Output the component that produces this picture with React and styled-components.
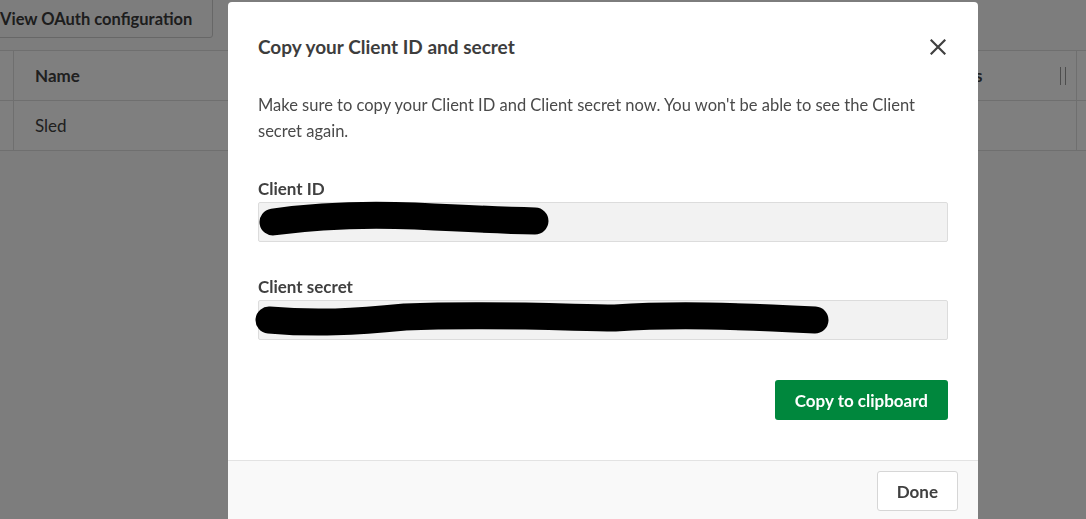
import styled, { createGlobalStyle } from "styled-components";

const GlobalStyle = createGlobalStyle`
  html, body {
    margin: 0;
    padding: 0;
    background: #ffffff;
    font-family: Lato, "Open Sans", "Liberation Sans", sans-serif;
    overflow: hidden;
  }
`;

const Page = styled.div`
  width: 1086px;
  height: 519px;
  display: flex;
  flex-direction: column;
  gap: 12px;
  background: #fafafa;
`;

const Toolbar = styled.div`
  display: flex;
  margin-left: -11px;
  margin-top: -10px;
`;

const OutlineButton = styled.button`
  height: 48px;
  padding: 9px 20px 0 10px;
  border: 1px solid #cfcfcf;
  border-radius: 3px;
  background: #fbfbfb;
  color: #3a3a3a;
  font-family: inherit;
  font-size: 16.5px;
  font-weight: 700;
`;

const Table = styled.div`
  display: flex;
  flex-direction: column;
  border-top: 1px solid #dedede;
  background: #ffffff;
`;

const Row = styled.div`
  display: grid;
  grid-template-columns: 13px 1fr 101px 10px;
  height: 49px;
  border-bottom: 1px solid #dedede;
  color: #404040;
  font-size: 17px;
  font-weight: ${(p) => (p.$head ? 700 : 400)};
`;

const Cell = styled.div`
  display: flex;
  align-items: center;
  padding-left: ${(p) => p.$pad || 0}px;
  border-left: ${(p) => (p.$divider ? "1px solid #dedede" : "none")};
  justify-content: ${(p) => p.$justify || "flex-start"};
`;

const Handle = styled.span`
  display: flex;
  gap: 4px;
  margin-right: 10px;
  span {
    width: 1px;
    height: 18px;
    background: #9a9a9a;
  }
`;

const Overlay = styled.div`
  position: fixed;
  inset: 0;
  background: rgba(0, 0, 0, 0.5);
`;

const Modal = styled.div`
  position: fixed;
  left: 228px;
  top: 2px;
  width: 750px;
  height: 540px;
  background: #ffffff;
  border-radius: 4px;
  display: flex;
  flex-direction: column;
  color: #404040;
`;

const Body = styled.div`
  padding: 33px 30px 40px;
  display: flex;
  flex-direction: column;
`;

const Header = styled.div`
  display: flex;
  align-items: center;
  justify-content: space-between;
`;

const Title = styled.h2`
  margin: 0;
  font-size: 19px;
  line-height: 24px;
  font-weight: 700;
  color: #3d3d3d;
`;

const CloseButton = styled.button`
  width: 20px;
  height: 20px;
  padding: 0;
  border: none;
  background: transparent;
  display: flex;
  align-items: center;
  justify-content: center;
`;

const Description = styled.p`
  margin: 33px 0 0;
  font-size: 16.5px;
  line-height: 26px;
  color: #4a4a4a;
`;

const Label = styled.div`
  margin-top: ${(p) => p.$top}px;
  font-size: 17px;
  line-height: 20px;
  font-weight: 700;
  color: #404040;
`;

const Field = styled.div`
  position: relative;
  margin-top: 3px;
  height: 38px;
  border: 1px solid #dcdcdc;
  border-radius: 2px;
  background: #f2f2f2;
`;

const Scribble = styled.svg`
  position: absolute;
  left: -4px;
  top: -1px;
  overflow: visible;
`;

const Actions = styled.div`
  display: flex;
  justify-content: flex-end;
  margin-top: 40px;
`;

const PrimaryButton = styled.button`
  height: 40px;
  padding: 0 20px;
  border: none;
  border-radius: 3px;
  background: #00873d;
  color: #ffffff;
  font-family: inherit;
  font-size: 17px;
  font-weight: 700;
`;

const Footer = styled.div`
  flex: 1;
  border-top: 1px solid #e3e3e3;
  background: #f9f9f9;
  padding: 10px 20px;
  display: flex;
  justify-content: flex-end;
  align-items: flex-start;
`;

const SecondaryButton = styled.button`
  height: 40px;
  padding: 0 19px;
  border: 1px solid #d6d6d6;
  border-radius: 3px;
  background: #ffffff;
  color: #404040;
  font-family: inherit;
  font-size: 17px;
  font-weight: 700;
`;

function Redaction({ width, d }) {
  return (
    <Scribble width={width} height={40} viewBox={`0 0 ${width} 40`}>
      <path d={d} fill="none" stroke="#000" strokeWidth="27" strokeLinecap="round" strokeLinejoin="round" />
    </Scribble>
  );
}

export default function App() {
  return (
    <>
      <GlobalStyle />
      <Page>
        <Toolbar>
          <OutlineButton>View OAuth configuration</OutlineButton>
        </Toolbar>
        <Table>
          <Row $head>
            <Cell />
            <Cell $divider $pad={21}>Name</Cell>
            <Cell $justify="space-between">
              <span>s</span>
              <Handle><span /><span /></Handle>
            </Cell>
            <Cell $divider />
          </Row>
          <Row>
            <Cell />
            <Cell $divider $pad={21}>Sled</Cell>
            <Cell />
            <Cell $divider />
          </Row>
        </Table>
      </Page>
      <Overlay />
      <Modal>
        <Body>
          <Header>
            <Title>Copy your Client ID and secret</Title>
            <CloseButton aria-label="Close">
              <svg width="16" height="16" viewBox="0 0 16 16">
                <path d="M1.5 1.5 L14.5 14.5 M14.5 1.5 L1.5 14.5" stroke="#404040" strokeWidth="2.2" strokeLinecap="square" />
              </svg>
            </CloseButton>
          </Header>
          <Description>
            Make sure to copy your Client ID and Client secret now. You won't be able to see the Client secret again.
          </Description>
          <Label $top={35}>Client ID</Label>
          <Field>
            <Redaction width={300} d="M18 20 C 60 14, 110 12, 160 14 C 200 16, 240 18, 280 19" />
          </Field>
          <Label $top={35}>Client secret</Label>
          <Field>
            <Redaction width={580} d="M14 20 C 60 24, 100 22, 150 17 C 230 14, 300 17, 360 18 C 420 14, 480 16, 560 20" />
          </Field>
          <Actions>
            <PrimaryButton>Copy to clipboard</PrimaryButton>
          </Actions>
        </Body>
        <Footer>
          <SecondaryButton>Done</SecondaryButton>
        </Footer>
      </Modal>
    </>
  );
}
